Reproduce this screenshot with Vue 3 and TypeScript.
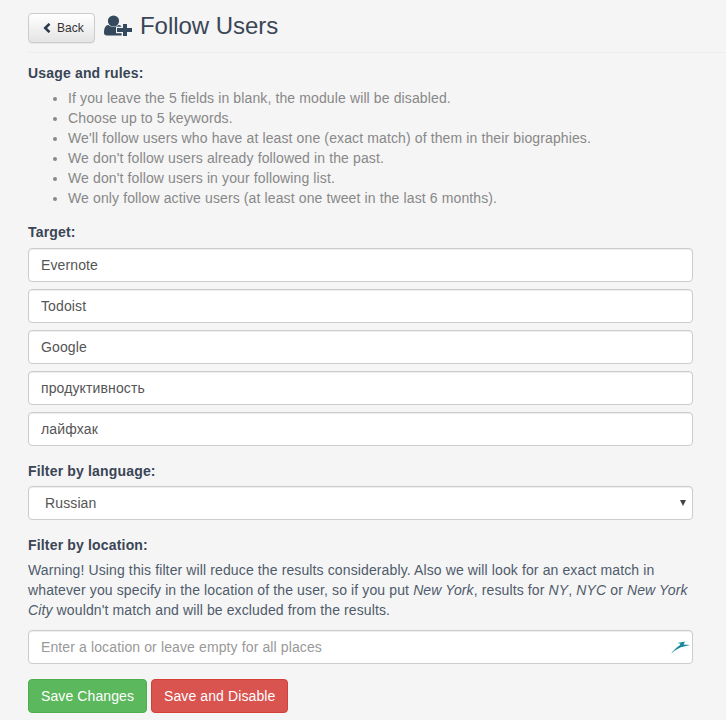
<script setup lang="ts">
const rules: string[] = [
  'If you leave the 5 fields in blank, the module will be disabled.',
  'Choose up to 5 keywords.',
  "We'll follow users who have at least one (exact match) of them in their biographies.",
  "We don't follow users already followed in the past.",
  "We don't follow users in your following list.",
  'We only follow active users (at least one tweet in the last 6 months).',
]
const targets: string[] = ['Evernote', 'Todoist', 'Google', 'продуктивность', 'лайфхак']
</script>

<template>
  <div class="page">
    <header class="head">
      <button class="btn btn-back" type="button">
        <svg class="chev" viewBox="0 0 8 10" width="8" height="10"><path d="M6.5 0.8 L2.2 5 L6.5 9.2" fill="none" stroke="#2b3a4a" stroke-width="2.5" /></svg>
        <span>Back</span>
      </button>
      <svg class="uplus" viewBox="0 0 28 21" width="28" height="21">
        <circle cx="9.5" cy="6" r="5.6" fill="#34495e" />
        <path d="M0 18 C0 13 1.5 10 4.5 10 C7 12.5 12 12.5 14.5 10 C15.5 10 16.5 10.3 17.3 11 L17.3 11.7 L12 11.7 L12 18.2 L17.7 18.2 L17.7 20.5 L3 20.5 C1 20.5 0 19.5 0 18 Z" fill="#34495e" />
        <path d="M13 13 h6 v-4 h4 v4 h5 v4 h-5 v4 h-4 v-4 h-6 Z" fill="#34495e" />
      </svg>
      <h1 class="title">Follow Users</h1>
    </header>

    <main class="body">
      <h2 class="lbl first">Usage and rules:</h2>
      <ul class="rules">
        <li v-for="r in rules" :key="r">{{ r }}</li>
      </ul>

      <h2 class="lbl target">Target:</h2>
      <div class="stack">
        <input v-for="t in targets" :key="t" class="field" type="text" :value="t" />
      </div>

      <h2 class="lbl lang">Filter by language:</h2>
      <div class="select-wrap">
        <select class="field select">
          <option>Russian</option>
        </select>
        <span class="arrow"></span>
      </div>

      <h2 class="lbl loc">Filter by location:</h2>
      <p class="warn">
        Warning! Using this filter will reduce the results considerably. Also we will look for an exact match in whatever you specify in the location of the user, so if you put <em>New York</em>, results for <em>NY</em>, <em>NYC</em> or <em>New York City</em> wouldn't match and will be excluded from the results.
      </p>
      <div class="loc-wrap">
        <input class="field" type="text" placeholder="Enter a location or leave empty for all places" />
        <svg class="gazelle" viewBox="0 0 21 14" width="21" height="14">
          <path d="M1 13.7 C3.5 10.5 6 7.5 9.5 5.5 L10.5 3.7 L7.5 3 L15 1.5 L13.5 4.5 L20 5 L14 6.5 C10 7 5 10 1 13.7 Z" fill="#17899b" />
        </svg>
      </div>

      <div class="actions">
        <button class="btn btn-green" type="button">Save Changes</button>
        <button class="btn btn-red" type="button">Save and Disable</button>
      </div>
    </main>
  </div>
</template>

<style>
html, body { background: #f5f5f5; }
</style>

<style scoped>
.page {
  width: 726px;
  height: 720px;
  overflow: hidden;
  box-sizing: border-box;
  padding-left: 28px;
  font-family: "Liberation Sans", Arial, sans-serif;
  font-size: 14px;
  line-height: 20px;
  letter-spacing: 0.12px;
  color: #333;
  background: #f5f5f5;
}
.head {
  display: flex;
  align-items: center;
  height: 52px;
  border-bottom: 1px solid #eee;
}
.btn {
  font-family: inherit;
  font-size: 14px;
  line-height: 20px;
  letter-spacing: 0.1px;
  border: 1px solid transparent;
  border-radius: 4px;
  cursor: pointer;
}
.btn-back {
  display: flex;
  align-items: center;
  gap: 6px;
  width: 67px;
  height: 30px;
  margin-top: 4px;
  padding: 0 0 0 14px;
  font-size: 12px;
  letter-spacing: 0;
  color: #333;
  background: linear-gradient(#fff, #e4e4e4);
  border-color: #ccc;
  box-shadow: 0 1px 0 rgba(0, 0, 0, 0.05);
}
.uplus { margin-left: 9px; margin-bottom: 1px; }
.title {
  margin: 0 0 0 8px;
  font-size: 24px;
  font-weight: 400;
  line-height: 26px;
  letter-spacing: -0.05px;
  color: #3a4656;
}
.body { width: 665px; }
.lbl {
  margin: 0;
  font-size: 14px;
  font-weight: 700;
  line-height: 20px;
  color: #3a4556;
  letter-spacing: 0.17px;
}
.first { margin-top: 10px; }
.rules {
  margin: 0;
  padding: 5px 0 0 40px;
  color: #888;
}
.target { margin-top: 14px; }
.stack {
  display: flex;
  flex-direction: column;
  gap: 7px;
  margin-top: 6px;
}
.field {
  display: block;
  box-sizing: border-box;
  width: 100%;
  height: 34px;
  padding: 6px 12px;
  font-family: inherit;
  font-size: 14px;
  line-height: 20px;
  letter-spacing: 0.12px;
  color: #555;
  background: #fff;
  border: 1px solid #ccc;
  border-radius: 4px;
  box-shadow: inset 0 1px 1px rgba(0, 0, 0, 0.075);
  outline: none;
}
.field::placeholder { color: #999; opacity: 1; }
.lang { margin-top: 15px; }
.select-wrap { position: relative; margin-top: 5px; }
.select {
  appearance: none;
  padding-left: 16px;
}
.arrow {
  position: absolute;
  right: 7px;
  top: 14px;
  width: 0;
  height: 0;
  border-left: 3px solid transparent;
  border-right: 3px solid transparent;
  border-top: 6px solid #444;
}
.loc { margin-top: 15px; }
.warn { margin: 5px 0 0; color: #4f5b6b; }
.loc-wrap { position: relative; margin-top: 10px; }
.gazelle { position: absolute; right: 2px; top: 10px; }
.actions { display: flex; gap: 4px; margin-top: 15px; }
.btn-green, .btn-red { height: 34px; padding: 6px 12px; color: #fff; }
.btn-green { background: #5cb85c; border-color: #4cae4c; }
.btn-red { background: #d9534f; border-color: #d43f3a; }
</style>
